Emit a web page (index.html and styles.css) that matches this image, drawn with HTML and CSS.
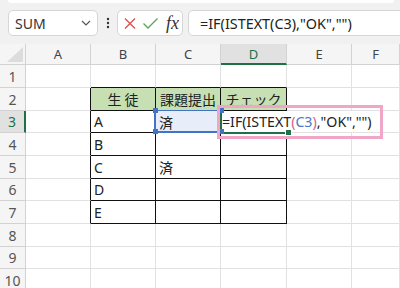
FILE: index.html
```html
<!DOCTYPE html>
<html lang="ja">
<head>
    <meta charset="UTF-8">
    <title>Sheet</title>
    <link rel="stylesheet" href="styles.css">
</head>
<body>
    <div class="toolbar">
        <div class="ribbon-edge"></div>
        <div class="bar">
            <div class="namebox">
                <span>SUM</span>
                <svg width="10" height="6" viewBox="0 0 10 6"><path d="M1 1 L5 5 L9 1" fill="none" stroke="#555" stroke-width="1.2"/></svg>
            </div>
            <div class="dots">
                <svg width="4" height="12" viewBox="0 0 4 12"><circle cx="2" cy="2" r="1.2" fill="#333"/><circle cx="2" cy="6" r="1.2" fill="#333"/><circle cx="2" cy="10" r="1.2" fill="#333"/></svg>
            </div>
            <div class="fxbox">
                <svg width="12" height="11" viewBox="0 0 12 11"><path d="M1 0.5 L11 10.5 M11 0.5 L1 10.5" stroke="#e05252" stroke-width="1.4" fill="none"/></svg>
                <svg width="15" height="11" viewBox="0 0 15 11"><path d="M0.5 5.5 L5 10 L14.5 0.5" stroke="#5aa65a" stroke-width="1.4" fill="none"/></svg>
                <span class="fx">fx</span>
            </div>
            <div class="formula">=IF(ISTEXT(C3),"OK","")</div>
        </div>
    </div>

    <div class="sheet">
        <!-- column headers -->
        <div class="cell corner"><svg width="16" height="15" viewBox="0 0 16 15"><path d="M16 0 L16 15 L0 15 Z" fill="#dcdcdc"/></svg></div>
        <div class="cell hd">A</div>
        <div class="cell hd">B</div>
        <div class="cell hd">C</div>
        <div class="cell hd sel">D</div>
        <div class="cell hd">E</div>
        <div class="cell hd">F</div>

        <!-- row 1 -->
        <div class="cell rh">1</div>
        <div class="cell"></div>
        <div class="cell tt"></div>
        <div class="cell tt"></div>
        <div class="cell tt"></div>
        <div class="cell"></div>
        <div class="cell"></div>

        <!-- row 2 -->
        <div class="cell rh">2</div>
        <div class="cell tl"></div>
        <div class="cell t head wide">生徒</div>
        <div class="cell t head">課題提出</div>
        <div class="cell t head">チェック</div>
        <div class="cell"></div>
        <div class="cell"></div>

        <!-- row 3 -->
        <div class="cell rh sel">3</div>
        <div class="cell tl"></div>
        <div class="cell t">A</div>
        <div class="cell t ref">済<i class="ref-frame"><b class="hnd h1"></b><b class="hnd h2"></b><b class="hnd h3"></b><b class="hnd h4"></b></i></div>
        <div class="cell t active">
            <span class="editor">=IF(ISTEXT<span class="paren">(</span><span class="arg">C3</span><span class="paren">)</span>,"OK","")</span>
            <i class="active-frame"><b class="fill-hnd"></b></i>
            <i class="note"></i>
        </div>
        <div class="cell"></div>
        <div class="cell"></div>

        <!-- row 4 -->
        <div class="cell rh">4</div>
        <div class="cell tl"></div>
        <div class="cell t">B</div>
        <div class="cell t"></div>
        <div class="cell t"></div>
        <div class="cell"></div>
        <div class="cell"></div>

        <!-- row 5 -->
        <div class="cell rh">5</div>
        <div class="cell tl"></div>
        <div class="cell t">C</div>
        <div class="cell t">済</div>
        <div class="cell t"></div>
        <div class="cell"></div>
        <div class="cell"></div>

        <!-- row 6 -->
        <div class="cell rh">6</div>
        <div class="cell tl"></div>
        <div class="cell t">D</div>
        <div class="cell t"></div>
        <div class="cell t"></div>
        <div class="cell"></div>
        <div class="cell"></div>

        <!-- row 7 -->
        <div class="cell rh">7</div>
        <div class="cell tl"></div>
        <div class="cell t">E</div>
        <div class="cell t"></div>
        <div class="cell t"></div>
        <div class="cell"></div>
        <div class="cell"></div>

        <!-- rows 8-10 -->
        <div class="cell rh">8</div>
        <div class="cell"></div>
        <div class="cell"></div>
        <div class="cell"></div>
        <div class="cell"></div>
        <div class="cell"></div>
        <div class="cell"></div>

        <div class="cell rh">9</div>
        <div class="cell"></div>
        <div class="cell"></div>
        <div class="cell"></div>
        <div class="cell"></div>
        <div class="cell"></div>
        <div class="cell"></div>

        <div class="cell rh">10</div>
        <div class="cell"></div>
        <div class="cell"></div>
        <div class="cell"></div>
        <div class="cell"></div>
        <div class="cell"></div>
        <div class="cell"></div>
    </div>
</body>
</html>
```

FILE: styles.css
```css
body { margin: 0; width: 400px; height: 288px; overflow: hidden; background: #fff; font-family: "Noto Sans", "Noto Sans CJK JP", sans-serif; color: #222; }

/* formula bar */
.toolbar { background: #f1f1f1; height: 44px; overflow: hidden; }
.ribbon-edge { height: 3px; margin: 0 6px 0 8px; background: #fff; border-radius: 0 0 6px 6px; }
.bar { display: flex; align-items: center; height: 26px; margin-top: 7px; padding-left: 8px; }
.namebox { width: 90px; height: 26px; box-sizing: border-box; display: flex; align-items: center; justify-content: space-between; padding: 0 6px; background: #fff; border: 1px solid #d6d6d6; border-radius: 5px; font-size: 14px; color: #333; }
.dots { width: 19px; display: flex; justify-content: center; }
.fxbox { width: 66px; height: 26px; box-sizing: border-box; display: flex; align-items: center; gap: 7px; padding-left: 6px; background: #fff; border: 1px solid #d6d6d6; border-radius: 5px; }
.fx { font-family: "Liberation Serif", serif; font-style: italic; font-size: 18px; color: #333; margin-left: 1px; }
.formula { flex: 1; height: 26px; box-sizing: border-box; margin: 0 -20px 0 5px; padding-left: 11px; display: flex; align-items: center; background: #fff; border: 1px solid #d6d6d6; border-radius: 5px; font-size: 14.4px; white-space: nowrap; }

/* grid */
.sheet { display: grid; grid-template-columns: 26px 65px 65px 65px 66px 65px 1fr; grid-template-rows: 21px 23px 23px 22px 23px 23px 22px 23px 23px 22px 23px; font-size: 14px; }
.cell { position: relative; box-sizing: border-box; display: flex; align-items: center; padding-left: 3px; white-space: nowrap; border-right: 1px solid #e1e1e1; border-bottom: 1px solid #e1e1e1; }
.corner { background: #f5f5f5; border-color: #d2d2d2; align-items: flex-end; justify-content: flex-end; padding: 0 2px 2px 0; }
.hd { background: #f5f5f5; border-color: #d2d2d2; justify-content: center; padding: 0; font-size: 13px; color: #444; }
.rh { background: #f5f5f5; border-color: #d2d2d2; justify-content: center; padding: 0; color: #555; }
.hd.sel { background: #e1e1e1; color: #1e7145; border-bottom: 2px solid #1e7145; }
.rh.sel { background: #e1e1e1; color: #1e7145; border-right: 2px solid #1e7145; }

.t { border-color: #111; }
.tl { border-right-color: #111; }
.tt { border-bottom-color: #111; }
.head { background: #c6e0b4; justify-content: center; padding: 0; }
.wide { letter-spacing: 3px; padding-left: 3px; }
.ref { background: #e7eefa; }

.ref-frame { position: absolute; left: -2px; top: -1px; right: -1px; bottom: -1px; border-left: 2px solid #4472c4; border-bottom: 2px solid #4472c4; border-top: 1px solid #4472c4; z-index: 3; }
.hnd { position: absolute; width: 5px; height: 5px; background: #4472c4; }
.h1 { left: -3px; top: -3px; }
.h2 { left: -3px; bottom: -3px; }
.h3 { right: -3px; top: -3px; }
.h4 { right: -3px; bottom: -3px; }

.editor { position: absolute; left: 0; top: 0; width: 157px; height: 21px; padding-left: 1px; display: flex; align-items: center; background: #fff; font-size: 14.2px; z-index: 2; }
.paren { color: #cf5f8f; }
.arg { color: #4a78c8; }
.active-frame { position: absolute; left: -1px; top: 0; width: 67px; bottom: -2px; border-left: 2px solid #1e7145; border-bottom: 2px solid #1e7145; z-index: 2; }
.fill-hnd { position: absolute; right: -3px; bottom: -4px; width: 5px; height: 5px; background: #1e7145; border: 1px solid #fff; }
.note { position: absolute; left: -4px; top: -6px; width: 166px; height: 34px; box-sizing: border-box; border: 3px solid #f2a6c7; z-index: 4; }
```
